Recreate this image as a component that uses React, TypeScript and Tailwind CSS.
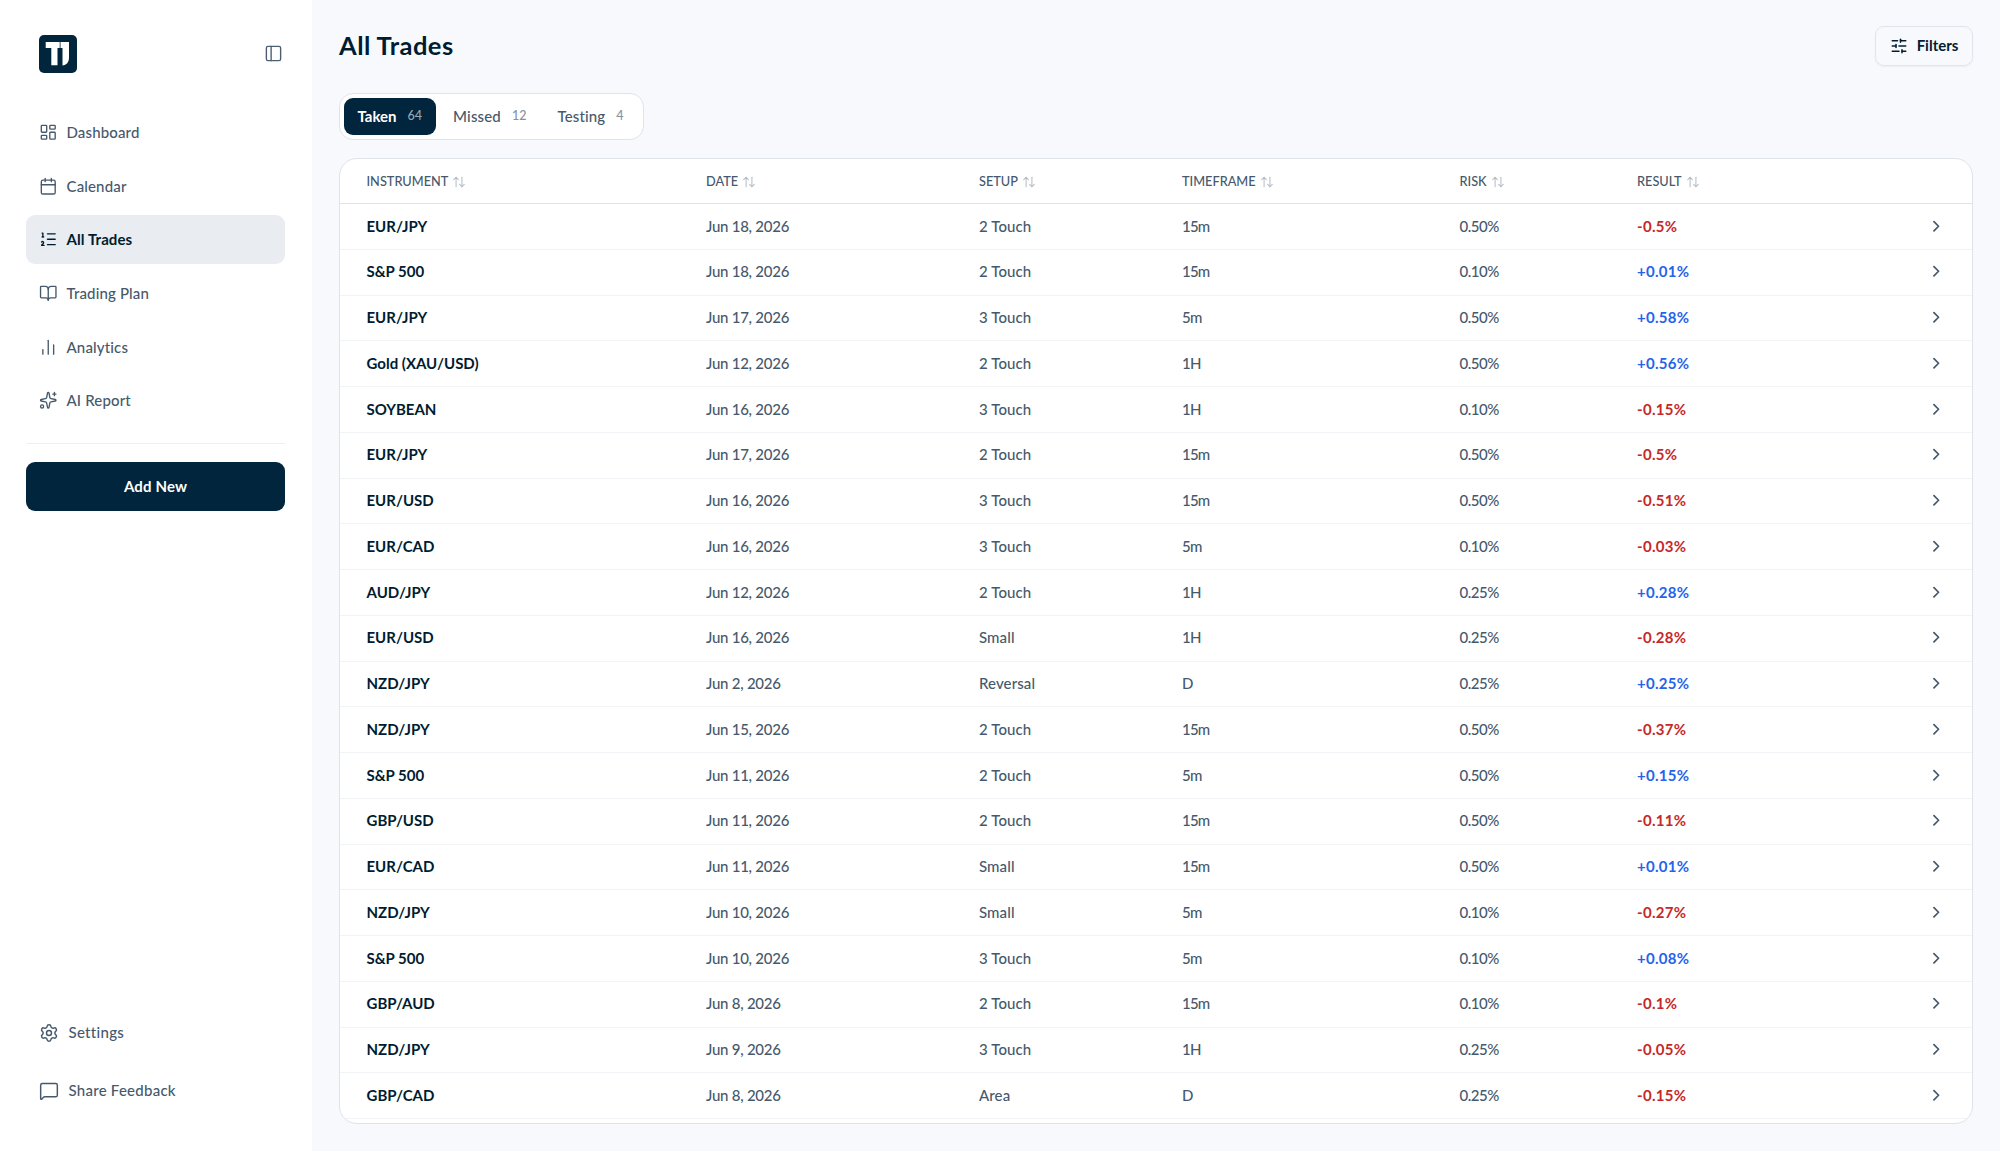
import {
  ArrowUpDown,
  BookOpen,
  Calendar,
  ChartNoAxesColumn,
  ChevronRight,
  LayoutDashboard,
  ListOrdered,
  MessageSquare,
  PanelLeft,
  Settings,
  SlidersHorizontal,
  Sparkles,
} from 'lucide-react'

const navItems = [
  { label: 'Dashboard', icon: LayoutDashboard },
  { label: 'Calendar', icon: Calendar },
  { label: 'All Trades', icon: ListOrdered, active: true },
  { label: 'Trading Plan', icon: BookOpen },
  { label: 'Analytics', icon: ChartNoAxesColumn },
  { label: 'AI Report', icon: Sparkles },
]

const tabs = [
  { label: 'Taken', count: 64, active: true },
  { label: 'Missed', count: 12 },
  { label: 'Testing', count: 4 },
]

const columns = ['Instrument', 'Date', 'Setup', 'Timeframe', 'Risk', 'Result']

// instrument, date, setup, timeframe, risk, result
const trades = [
  ['EUR/JPY', 'Jun 18, 2026', '2 Touch', '15m', '0.50%', '-0.5%'],
  ['S&P 500', 'Jun 18, 2026', '2 Touch', '15m', '0.10%', '+0.01%'],
  ['EUR/JPY', 'Jun 17, 2026', '3 Touch', '5m', '0.50%', '+0.58%'],
  ['Gold (XAU/USD)', 'Jun 12, 2026', '2 Touch', '1H', '0.50%', '+0.56%'],
  ['SOYBEAN', 'Jun 16, 2026', '3 Touch', '1H', '0.10%', '-0.15%'],
  ['EUR/JPY', 'Jun 17, 2026', '2 Touch', '15m', '0.50%', '-0.5%'],
  ['EUR/USD', 'Jun 16, 2026', '3 Touch', '15m', '0.50%', '-0.51%'],
  ['EUR/CAD', 'Jun 16, 2026', '3 Touch', '5m', '0.10%', '-0.03%'],
  ['AUD/JPY', 'Jun 12, 2026', '2 Touch', '1H', '0.25%', '+0.28%'],
  ['EUR/USD', 'Jun 16, 2026', 'Small', '1H', '0.25%', '-0.28%'],
  ['NZD/JPY', 'Jun 2, 2026', 'Reversal', 'D', '0.25%', '+0.25%'],
  ['NZD/JPY', 'Jun 15, 2026', '2 Touch', '15m', '0.50%', '-0.37%'],
  ['S&P 500', 'Jun 11, 2026', '2 Touch', '5m', '0.50%', '+0.15%'],
  ['GBP/USD', 'Jun 11, 2026', '2 Touch', '15m', '0.50%', '-0.11%'],
  ['EUR/CAD', 'Jun 11, 2026', 'Small', '15m', '0.50%', '+0.01%'],
  ['NZD/JPY', 'Jun 10, 2026', 'Small', '5m', '0.10%', '-0.27%'],
  ['S&P 500', 'Jun 10, 2026', '3 Touch', '5m', '0.10%', '+0.08%'],
  ['GBP/AUD', 'Jun 8, 2026', '2 Touch', '15m', '0.10%', '-0.1%'],
  ['NZD/JPY', 'Jun 9, 2026', '3 Touch', '1H', '0.25%', '-0.05%'],
  ['GBP/CAD', 'Jun 8, 2026', 'Area', 'D', '0.25%', '-0.15%'],
]

const rowGrid =
  'grid grid-cols-[339.5px_273px_203px_277.5px_177.500px_1fr_36px] items-center pl-[26.5px]'

function Logo() {
  return (
    <svg viewBox="0 0 38 38" className="size-[38px]">
      <rect width="38" height="38" rx="5" fill="#00253c" />
      <path d="M6.700 7h14v6h-2.200v17.300h-6.200V13H6.700z" fill="#fff" />
      <path d="M21.500 7H30v15.500c0 4.800-2.500 7.600-6.500 8V13h-2z" fill="#fff" />
    </svg>
  )
}

function Sidebar() {
  return (
    <aside className="flex w-[312px] shrink-0 flex-col bg-white pr-[27px] pl-[26px]">
      <div className="flex h-[108px] items-center justify-between pr-[2px] pb-px pl-[13px]">
        <Logo />
        <PanelLeft className="size-[19px] text-[#4c5f72]" strokeWidth={1.75} />
      </div>

      <nav className="flex flex-col gap-[4.600px]">
        {navItems.map(({ label, icon: Icon, active }) => (
          <a
            key={label}
            className={`flex h-[49px] items-center gap-[9px] rounded-[9px] pl-[13px] text-[15px] ${
              active
                ? 'bg-[#e9edf2] font-bold tracking-[0.1px] text-[#001c30]'
                : 'font-medium tracking-[0.15px] text-[#46596c]'
            }`}
          >
            <Icon className="size-[18.500px]" strokeWidth={1.75} />
            {label}
          </a>
        ))}
      </nav>

      <div className="mt-[18px] border-t border-[#edf0f4] pt-[18px]">
        <button className="h-[49px] w-full rounded-[9px] bg-[#00253c] text-[15px] font-bold tracking-[0.15px] text-white">
          Add New
        </button>
      </div>

      <div className="mt-auto mb-[36px] flex flex-col gap-[9px]">
        <a className="flex h-[49px] items-center gap-[9.500px] pl-[13px] text-[15px] font-medium tracking-[0.3px] text-[#46596c]">
          <Settings className="size-5" strokeWidth={1.75} />
          Settings
        </a>
        <a className="flex h-[49px] items-center gap-[9.500px] pl-[13px] text-[15px] font-medium tracking-[0.25px] text-[#46596c]">
          <MessageSquare className="size-5" strokeWidth={1.75} />
          Share Feedback
        </a>
      </div>
    </aside>
  )
}

function TradesTable() {
  return (
    <div className="h-[966px] overflow-hidden rounded-[18px] border border-[#dfe3ea] bg-white">
      <div className={`${rowGrid} h-[45px] border-b border-[#dfe3ea] pt-px`}>
        {columns.map((name) => (
          <div
            key={name}
            className="flex items-center gap-1 text-[12.750px] font-medium text-[#46596c] uppercase"
          >
            {name}
            <ArrowUpDown className="size-[14px] text-[#b4bdc7]" strokeWidth={1.75} />
          </div>
        ))}
      </div>
      {trades.map(([instrument, date, setup, timeframe, risk, result], i) => (
        <div
          key={i}
          className={`${rowGrid} h-[45.750px] border-b border-[#f1f3f7] pb-px text-[15px] font-medium text-[#46596c]`}
        >
          <span className="font-bold text-[#001c30]">{instrument}</span>
          <span className="tracking-[-0.25px]">{date}</span>
          <span className="tracking-[0.1px]">{setup}</span>
          <span className="tracking-[-0.8px]">{timeframe}</span>
          <span className="tracking-[-0.5px]">{risk}</span>
          <span
            className={`font-bold tracking-[0.3px] ${
              result.startsWith('+') ? 'text-[#2563eb]' : 'text-[#c62828]'
            }`}
          >
            {result}
          </span>
          <ChevronRight className="-ml-[9px] size-[18.500px]" strokeWidth={2.25} />
        </div>
      ))}
    </div>
  )
}

export default function App() {
  return (
    <div className="flex h-[1151px] w-[2000px] overflow-hidden bg-[#f8f9fd] font-['Lato',sans-serif]">
      <Sidebar />
      <main className="flex min-w-0 flex-1 flex-col px-[27px] pt-[26px]">
        <header className="flex h-10 items-center justify-between">
          <h1 className="pb-0.5 text-[25.500px] font-bold tracking-[0.45px] text-[#001c30]">All Trades</h1>
          <button className="flex h-10 w-[98px] items-center justify-center gap-[9px] rounded-[9px] border border-[#e1e5eb] pb-px text-[15px] font-bold text-[#001c30] shadow-xs">
            <SlidersHorizontal className="size-[18px]" strokeWidth={2} />
            Filters
          </button>
        </header>

        <div className="mt-[27px] mb-[18px] flex h-[47px] w-[305px] items-center rounded-[14px] border border-[#dfe3ea] bg-white px-1">
          {tabs.map(({ label, count, active }) => (
            <button
              key={label}
              className={`flex h-[37px] items-center gap-[11px] rounded-[9px] px-[13.500px] text-[15px] ${
                active
                  ? 'bg-[#00253c] font-bold text-white'
                  : 'ml-1 font-medium tracking-[0.15px] text-[#46596c]'
              }`}
            >
              {label}
              <span
                className={`text-[12.500px] font-medium tracking-normal ${active ? 'text-[#9aa8b4]' : 'text-[#8592a0]'}`}
              >
                {count}
              </span>
            </button>
          ))}
        </div>

        <TradesTable />
      </main>
    </div>
  )
}
